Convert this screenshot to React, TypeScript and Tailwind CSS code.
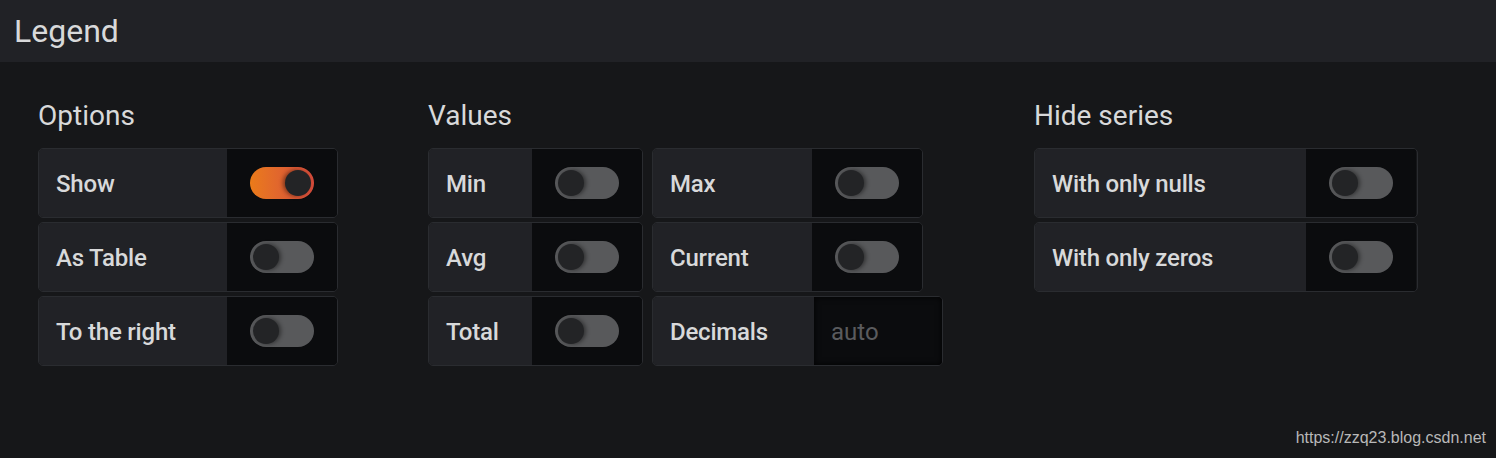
import React from "react";

function Toggle({ on }: { on?: boolean }) {
  return (
    <div
      className={
        "relative w-[64px] h-[32px] rounded-full " +
        (on
          ? "bg-gradient-to-r from-[#eb7b18] to-[#d44a3a]"
          : "bg-[#58595b]")
      }
    >
      <div
        className={
          "absolute top-[3px] w-[26px] h-[26px] rounded-full bg-[#232426] " +
          (on
            ? "right-[3px] shadow-[-2px_0_4px_rgba(0,0,0,0.45)]"
            : "left-[3px] shadow-[2px_0_4px_rgba(0,0,0,0.45)]")
        }
      />
    </div>
  );
}

function SwitchRow({
  label,
  labelW,
  on,
}: {
  label: string;
  labelW: string;
  on?: boolean;
}) {
  return (
    <div className="flex h-[70px] rounded-[5px] border border-[#2a2c30] overflow-hidden">
      <div
        className={
          labelW +
          " flex items-center pl-[17px] pt-[1px] bg-[#212226] text-[24px] font-medium text-[#d8d9da] tracking-[-0.2px]"
        }
      >
        {label}
      </div>
      <div className="w-[110px] flex items-center justify-center bg-[#0b0c0e]">
        <Toggle on={on} />
      </div>
    </div>
  );
}

function Heading({ children }: { children: React.ReactNode }) {
  return (
    <div className="h-[36px] leading-[36px] text-[28px] text-[#d8d9da] mb-[14px]">
      {children}
    </div>
  );
}

export default function App() {
  return (
    <div className="relative w-[1496px] h-[458px] bg-[#161719] font-['Roboto',sans-serif] overflow-hidden">
      <div className="h-[62px] bg-[#212226] flex items-center pl-[14px] text-[32px] text-[#d8d9da]">
        Legend
      </div>
      <div className="flex pt-[36px] pl-[38px]">
        <div className="w-[300px] mr-[90px]">
          <Heading>Options</Heading>
          <div className="flex flex-col gap-[4px]">
            <SwitchRow label="Show" labelW="w-[188px]" on />
            <SwitchRow label="As Table" labelW="w-[188px]" />
            <SwitchRow label="To the right" labelW="w-[188px]" />
          </div>
        </div>
        <div className="w-[516px] mr-[90px]">
          <Heading>Values</Heading>
          <div className="flex gap-[9px]">
            <div className="w-[215px] flex flex-col gap-[4px]">
              <SwitchRow label="Min" labelW="w-[103px]" />
              <SwitchRow label="Avg" labelW="w-[103px]" />
              <SwitchRow label="Total" labelW="w-[103px]" />
            </div>
            <div className="flex flex-col gap-[4px] items-start">
              <div className="w-[271px]">
                <SwitchRow label="Max" labelW="w-[159px]" />
              </div>
              <div className="w-[271px]">
                <SwitchRow label="Current" labelW="w-[159px]" />
              </div>
              <div className="w-[291px] flex h-[70px] rounded-[5px] border border-[#2a2c30] overflow-hidden">
                <div className="w-[161px] flex items-center pl-[17px] pt-[1px] bg-[#212226] text-[24px] font-medium text-[#d8d9da] tracking-[-0.2px]">
                  Decimals
                </div>
                <div className="flex-1 flex items-center pl-[17px] pt-[1px] bg-[#0b0c0e] shadow-[inset_0_0_6px_rgba(0,0,0,0.9)] text-[24px] text-[#5a5b5e]">
                  auto
                </div>
              </div>
            </div>
          </div>
        </div>
        <div className="w-[384px]">
          <Heading>Hide series</Heading>
          <div className="flex flex-col gap-[4px]">
            <SwitchRow label="With only nulls" labelW="w-[271px]" />
            <SwitchRow label="With only zeros" labelW="w-[271px]" />
          </div>
        </div>
      </div>
      <div className="absolute right-[10px] bottom-[10px] text-[16px] leading-[20px] text-[#b8b8b8] font-['Liberation_Sans',Arial,sans-serif]">
        https://zzq23.blog.csdn.net
      </div>
    </div>
  );
}
